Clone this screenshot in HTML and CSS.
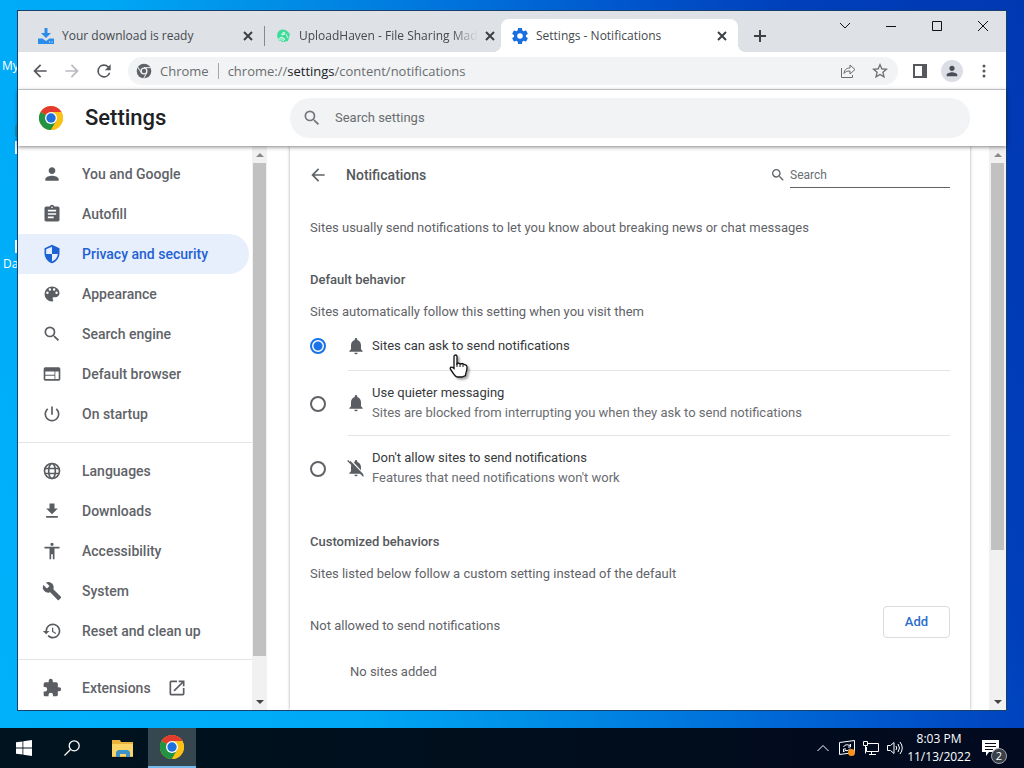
FILE: index.html
```html
<!DOCTYPE html>
<html lang="en">
<head>
<meta charset="utf-8">
<title>Settings - Notifications</title>
<link rel="stylesheet" href="styles.css">
</head>
<body>
<svg class="defs" aria-hidden="true">
  <symbol id="chrome" viewBox="0 0 24 24">
    <circle cx="12" cy="12" r="12" fill="#fbc116"/>
    <path d="M12 12 1.6 6A12 12 0 0 1 22.4 6z" fill="#e33b2e"/>
    <path d="M12 12 1.6 6A12 12 0 0 0 12 24l5.2-9z" fill="#229342"/>
    <path d="M12 6h10.4A12 12 0 0 1 12 24l5.2-9z" fill="#fbc116"/>
    <circle cx="12" cy="12" r="6" fill="#fff"/>
    <circle cx="12" cy="12" r="4.7" fill="#1f6fdc"/>
  </symbol>
  <symbol id="search" viewBox="0 0 24 24"><path d="M15.5 14h-.79l-.28-.27A6.47 6.47 0 0 0 16 9.5 6.5 6.5 0 1 0 9.5 16c1.61 0 3.09-.59 4.23-1.57l.27.28v.79l5 4.99L20.49 19l-4.99-5zm-6 0C7.01 14 5 11.99 5 9.5S7.01 5 9.5 5 14 7.01 14 9.5 11.99 14 9.5 14z"/></symbol>
  <symbol id="back" viewBox="0 0 24 24"><path d="M20 11H7.83l5.59-5.59L12 4l-8 8 8 8 1.41-1.41L7.83 13H20v-2z"/></symbol>
  <symbol id="person" viewBox="0 0 24 24"><path d="M12 12c2.21 0 4-1.79 4-4s-1.79-4-4-4-4 1.79-4 4 1.79 4 4 4zm0 2c-2.67 0-8 1.34-8 4v2h16v-2c0-2.66-5.33-4-8-4z"/></symbol>
  <symbol id="bell" viewBox="0 0 24 24"><path d="M12 22c1.1 0 2-.9 2-2h-4a2 2 0 0 0 2 2zm6-6v-5c0-3.07-1.64-5.64-4.500-6.320V4a1.500 1.500 0 0 0-3 0v.68C7.630 5.360 6 7.920 6 11v5l-2 2v1h16v-1l-2-2z"/></symbol>
  <symbol id="close" viewBox="0 0 16 16"><path d="m4 4 8 8m0-8-8 8" stroke="currentColor" stroke-width="2" fill="none"/></symbol>
</svg>

<main class="desktop">
  <span class="shortcut shortcut-green"></span>
  <span class="shortcut shortcut-label-a">My</span>
  <span class="shortcut shortcut-page-a"></span>
  <span class="shortcut shortcut-page-b"></span>
  <span class="shortcut shortcut-label-b">Da</span>

  <section class="window">
    <div class="tabstrip">
      <div class="tab">
        <svg class="i16" viewBox="0 0 16 16" fill="#2b8ceb"><path d="M6.500 0h3v5h3.500L8 10 3 5h3.500zM0 10.500h4.500L8 13l3.500-2.500H16V16H0z"/><path d="M11 14h1M13.500 14h1" stroke="#fff"/></svg>
        <span class="tab-title">Your download is ready</span>
        <button class="tab-close" aria-label="Close tab"><svg class="i16"><use href="#close"/></svg></button>
      </div>
      <div class="tab tab-divided">
        <svg class="i16" viewBox="0 0 16 16"><path d="M3 4a6 6 0 0 1 9-1l3 3-2 7-5 1-5-2-1-5z" fill="#3ddc97"/><path d="M7 5.500 9 4l1 2-3 1zM2.500 12 6 9l4 2-2 2M11 6l2 4" stroke="#d9f7ea" fill="#8cecc4"/></svg>
        <span class="tab-title tab-fade">UploadHaven - File Sharing Mad</span>
        <button class="tab-close" aria-label="Close tab"><svg class="i16"><use href="#close"/></svg></button>
      </div>
      <div class="tab tab-active">
        <svg class="i16" viewBox="2 2 20 20" fill="#1a6fe0"><path d="M19.430 12.980c.04-.32.07-.64.07-.98s-.03-.66-.07-.98l2.110-1.650a.5.5 0 0 0 .12-.64l-2-3.460a.5.5 0 0 0-.61-.22l-2.490 1a7.300 7.300 0 0 0-1.690-.98l-.38-2.650A.49.49 0 0 0 14 2h-4a.49.49 0 0 0-.49.42l-.38 2.650c-.61.25-1.170.59-1.690.98l-2.490-1a.5.5 0 0 0-.61.22l-2 3.460a.5.5 0 0 0 .12.64l2.110 1.650c-.04.32-.07.65-.07.98s.03.66.07.98l-2.110 1.650a.5.5 0 0 0-.12.64l2 3.460c.12.22.39.3.61.22l2.490-1c.52.4 1.080.73 1.690.98l.38 2.650c.03.24.24.42.49.42h4c.25 0 .46-.18.49-.42l.38-2.650c.61-.25 1.170-.59 1.690-.98l2.490 1c.23.09.49 0 .61-.22l2-3.460a.5.5 0 0 0-.12-.64l-2.110-1.650zM12 15.500a3.500 3.500 0 1 1 0-7 3.500 3.500 0 0 1 0 7z"/></svg>
        <span class="tab-title">Settings - Notifications</span>
        <button class="tab-close" aria-label="Close tab"><svg class="i16"><use href="#close"/></svg></button>
      </div>
      <button class="new-tab" aria-label="New tab"><svg class="i16" viewBox="0 0 16 16"><path d="M8 2v12M2 8h12" stroke="currentColor" stroke-width="2"/></svg></button>
      <div class="caption">
        <button aria-label="Search tabs"><svg class="i16" viewBox="0 0 16 16"><path d="m3 5 5 5 5-5"/></svg></button>
        <button aria-label="Minimize"><svg class="i16" viewBox="0 0 16 16"><path d="M3 8.500h10"/></svg></button>
        <button aria-label="Maximize"><svg class="i16" viewBox="0 0 16 16"><path d="M3.500 3.500h9v9h-9z"/></svg></button>
        <button aria-label="Close"><svg class="i16" viewBox="0 0 16 16"><path d="m3 3 10 10m0-10L3 13"/></svg></button>
      </div>
    </div>

    <div class="toolbar">
      <button aria-label="Back"><svg class="i20"><use href="#back"/></svg></button>
      <button class="disabled" aria-label="Forward"><svg class="i20 flip"><use href="#back"/></svg></button>
      <button aria-label="Reload"><svg class="i20" viewBox="0 0 24 24"><path d="M17.650 6.350A8 8 0 1 0 19.730 14h-2.080A6 6 0 1 1 12 6c1.660 0 3.140.69 4.220 1.780L13 11h7V4l-2.350 2.350z"/></svg></button>
      <div class="omnibox">
        <svg class="i16" viewBox="0 0 24 24"><circle cx="12" cy="12" r="11" fill="#5f6368"/><path d="M12 7h10M7.700 14.500 2.700 6M16.300 14.500 11.500 23" stroke="#f1f3f4" stroke-width="1.500"/><circle cx="12" cy="12" r="4.300" fill="#5f6368" stroke="#f1f3f4" stroke-width="2"/></svg>
        <span>Chrome</span><span class="omni-sep"></span>
        <span class="url">chrome://<b>settings</b>/content/notifications</span>
        <button aria-label="Share"><svg class="i16" viewBox="0 0 16 16" fill="none" stroke="currentColor"><path d="M1.500 5v9.500h11V12M4 10.500c.5-4 2.500-5.500 6-5.500V2l5 4.500-5 4.500V8c-3 0-4.500.5-6 2.500z"/></svg></button>
        <button aria-label="Bookmark"><svg class="i16" viewBox="2 2 20 20"><path d="m22 9.240-7.190-.62L12 2 9.190 8.630 2 9.240l5.460 4.730L5.820 21 12 17.270 18.180 21l-1.630-7.030L22 9.240zM12 15.400l-3.760 2.270 1-4.280-3.320-2.880 4.380-.38L12 6.100l1.710 4.040 4.380.38-3.320 2.880 1 4.280L12 15.400z"/></svg></button>
      </div>
      <button aria-label="Side panel"><svg class="i16" viewBox="0 0 16 16"><path fill-rule="evenodd" d="M1 1h14v14H1zM3 3v10h7V3z"/></svg></button>
      <button aria-label="Profile"><span class="avatar"><svg class="i16"><use href="#person"/></svg></span></button>
      <button aria-label="Menu"><svg class="i16" viewBox="0 0 16 16"><circle cx="8" cy="3" r="1.500"/><circle cx="8" cy="8" r="1.500"/><circle cx="8" cy="13" r="1.500"/></svg></button>
    </div>

    <header class="header">
      <svg class="logo"><use href="#chrome"/></svg>
      <h1>Settings</h1>
      <label class="big-search"><svg class="i20"><use href="#search"/></svg><input type="text" placeholder="Search settings" aria-label="Search settings"></label>
    </header>

    <div class="content">
      <nav class="sidebar">
        <a href="#"><svg class="i20"><use href="#person"/></svg>You and Google</a>
        <a href="#"><svg class="i20" viewBox="0 0 24 24"><path d="M19 3h-4.180a3 3 0 0 0-5.640 0H5a2 2 0 0 0-2 2v14c0 1.100.9 2 2 2h14a2 2 0 0 0 2-2V5a2 2 0 0 0-2-2zm-7 0a1 1 0 1 1 0 2 1 1 0 0 1 0-2zm2 14H7v-2h7v2zm3-4H7v-2h10v2zm0-4H7V7h10v2z"/></svg>Autofill</a>
        <a href="#" class="selected"><svg class="i20" viewBox="0 0 24 24"><path d="M12 1 3 5v6c0 5.550 3.840 10.740 9 12 5.160-1.260 9-6.450 9-12V5l-9-4zm0 10.990h7c-.53 4.120-3.280 7.790-7 8.940V12H5V6.300l7-3.110v8.800z"/></svg>Privacy and security</a>
        <a href="#"><svg class="i20" viewBox="0 0 24 24"><path d="M12 3a9 9 0 0 0 0 18c.83 0 1.500-.67 1.500-1.500 0-.39-.15-.74-.39-1.010-.23-.26-.38-.61-.38-.99 0-.83.67-1.500 1.500-1.500H16a5 5 0 0 0 5-5c0-4.420-4.030-8-9-8zm-5.500 9a1.500 1.500 0 1 1 0-3 1.500 1.500 0 0 1 0 3zm3-4a1.500 1.500 0 1 1 0-3 1.500 1.500 0 0 1 0 3zm5 0a1.500 1.500 0 1 1 0-3 1.500 1.500 0 0 1 0 3zm3 4a1.500 1.500 0 1 1 0-3 1.500 1.500 0 0 1 0 3z"/></svg>Appearance</a>
        <a href="#"><svg class="i20"><use href="#search"/></svg>Search engine</a>
        <a href="#"><svg class="i20" viewBox="0 0 24 24"><path d="M20 4H4a2 2 0 0 0-2 2v12c0 1.100.9 2 2 2h16a2 2 0 0 0 2-2V6a2 2 0 0 0-2-2zm-5 14H4v-4h11v4zm0-5H4V9h11v4zm5 5h-4V9h4v9z"/></svg>Default browser</a>
        <a href="#"><svg class="i20" viewBox="0 0 24 24"><path d="M13 3h-2v10h2V3zm4.830 2.170-1.420 1.420A6.920 6.920 0 0 1 19 12a7 7 0 1 1-11.420-5.420L6.170 5.170A9 9 0 1 0 21 12a8.940 8.940 0 0 0-3.170-6.830z"/></svg>On startup</a>
        <hr>
        <a href="#"><svg class="i20" viewBox="0 0 24 24" fill="none" stroke="currentColor" stroke-width="2"><circle cx="12" cy="12" r="9"/><ellipse cx="12" cy="12" rx="4" ry="9"/><path d="M3.500 9h17M3.500 15h17"/></svg>Languages</a>
        <a href="#"><svg class="i20" viewBox="0 0 24 24"><path d="M19 9h-4V3H9v6H5l7 7 7-7zM5 18v2h14v-2H5z"/></svg>Downloads</a>
        <a href="#"><svg class="i20" viewBox="0 0 24 24"><path d="M12 2a2 2 0 1 1 0 4 2 2 0 0 1 0-4zm9 7h-6v13h-2v-6h-2v6H9V9H3V7h18v2z"/></svg>Accessibility</a>
        <a href="#"><svg class="i20" viewBox="0 0 24 24"><path d="m22.700 19-9.100-9.100c.9-2.300.4-5-1.500-6.900-2-2-5-2.400-7.400-1.300L9 6 6 9 1.600 4.700C.4 7.100.9 10.100 2.900 12.100c1.900 1.900 4.600 2.400 6.900 1.500l9.100 9.100c.4.4 1 .4 1.400 0l2.300-2.300c.5-.4.5-1.100.1-1.400z"/></svg>System</a>
        <a href="#"><svg class="i20" viewBox="0 0 24 24"><path d="M13 3a9 9 0 0 0-9 9H1l3.890 3.890.07.14L9 12H6a7 7 0 1 1 2.060 4.940l-1.420 1.420A9 9 0 1 0 13 3zm-1 5v5l4.280 2.540.72-1.210-3.500-2.080V8H12z"/></svg>Reset and clean up</a>
        <hr>
        <a href="#"><svg class="i20" viewBox="0 0 24 24"><path d="M20.500 11H19V7a2 2 0 0 0-2-2h-4V3.500a2.500 2.500 0 0 0-5 0V5H4a2 2 0 0 0-2 2v3.800h1.500a2.700 2.700 0 0 1 0 5.400H2V20c0 1.100.9 2 2 2h3.800v-1.500a2.700 2.700 0 0 1 5.400 0V22H17a2 2 0 0 0 2-2v-4h1.500a2.500 2.500 0 0 0 0-5z"/></svg>Extensions<svg class="i20 external" viewBox="0 0 24 24"><path d="M19 19H5V5h7V3H5a2 2 0 0 0-2 2v14c0 1.100.9 2 2 2h14a2 2 0 0 0 2-2v-7h-2v7zM14 3v2h3.590l-9.830 9.830 1.410 1.410L19 6.410V10h2V3h-7z"/></svg></a>
      </nav>
      <div class="scroll scroll-side"><i class="arrow up"></i><div class="track"><div class="thumb"></div></div><i class="arrow down"></i></div>

      <div class="pane">
        <article class="card">
          <div class="card-head">
            <button aria-label="Back"><svg class="i20"><use href="#back"/></svg></button>
            <h2>Notifications</h2>
            <label class="small-search"><svg class="i16"><use href="#search"/></svg><input type="text" placeholder="Search" aria-label="Search"></label>
          </div>
          <p class="intro">Sites usually send notifications to let you know about breaking news or chat messages</p>
          <h3>Default behavior</h3>
          <p>Sites automatically follow this setting when you visit them</p>
          <div class="options">
            <label class="option option-short"><input type="radio" name="mode" checked><span class="option-body"><svg class="i20"><use href="#bell"/></svg><span>Sites can ask to send notifications</span></span></label>
            <label class="option"><input type="radio" name="mode"><span class="option-body"><svg class="i20"><use href="#bell"/></svg><span>Use quieter messaging<small>Sites are blocked from interrupting you when they ask to send notifications</small></span></span></label>
            <label class="option"><input type="radio" name="mode"><span class="option-body"><svg class="i20" viewBox="0 0 24 24"><path d="M20 18.690 7.840 6.140 5.270 3.490 4 4.760l2.800 2.800v.01C6.280 8.560 6 9.730 6 11v5l-2 2v1h13.730l2 2L21 19.720 20 18.690zM12 22a2 2 0 0 0 2-2h-4a2 2 0 0 0 2 2zm6-7.320V11c0-3.080-1.640-5.640-4.500-6.320V4a1.500 1.500 0 0 0-3 0v.68c-.51.12-.99.32-1.450.56L18 14.680z"/><path d="m2 3 19 19" stroke="currentColor" stroke-width="1.500"/></svg><span>Don't allow sites to send notifications<small>Features that need notifications won't work</small></span></span></label>
          </div>
          <h3>Customized behaviors</h3>
          <p>Sites listed below follow a custom setting instead of the default</p>
          <div class="list-head"><span>Not allowed to send notifications</span><button class="add">Add</button></div>
          <p class="empty">No sites added</p>
        </article>
      </div>
      <div class="scroll scroll-main"><i class="arrow up"></i><div class="track"><div class="thumb"></div></div><i class="arrow down"></i></div>
    </div>
  </section>

  <svg class="cursor" viewBox="0 0 20 26"><path d="M5 2.500c0-2 3-2 3 0V10l1.500-1 2 1 2-.5 1.500 1 2 .5c1 .5 1 1 1 2.500 0 4-1.500 5-1.500 8L13 23H9c-3 0-4-3-7-7-2-2.500 0-4 3-1.500z" fill="#fff" stroke="#111" stroke-width="1.300"/><path d="M8 9v4M11 10v3M14 10.500V13" stroke="#111"/></svg>
</main>

<footer class="taskbar">
  <button class="task" aria-label="Start"><svg class="i16" viewBox="0 0 16 16" fill="#fff"><path d="M0 2.300 6.500 1.400v6.200H0zM7.300 1.300 16 0v7.600H7.300zM0 8.400h6.500v6.200L0 13.700zM7.300 8.400H16V16l-8.700-1.300z"/></svg></button>
  <button class="task" aria-label="Search"><svg class="i16" viewBox="0 0 16 16" fill="none" stroke="#fff" stroke-width="1.300"><circle cx="10.200" cy="5.800" r="5"/><path d="M6.500 9.500.5 15.500"/></svg></button>
  <div class="apps">
    <button class="task" aria-label="File Explorer"><svg class="folder" viewBox="0 0 22 18"><path d="M0 1h8l1 2h12v15H0z" fill="#e9b43d"/><path d="M0 5h21v12H0z" fill="#fbd567"/><path d="M4 18v-5l2-2h10l2 2v5h-4v-3H8v3z" fill="#3f92c9"/></svg></button>
    <button class="task task-open" aria-label="Google Chrome"><svg class="logo"><use href="#chrome"/></svg></button>
  </div>
  <div class="tray">
    <button aria-label="Show hidden icons"><svg class="i16" viewBox="0 0 16 16"><path d="m2.500 11 5.500-5.500 5.500 5.500"/></svg></button>
    <button aria-label="Update"><svg class="i16" viewBox="0 0 16 16"><path d="M.5 2.500 15.500.5v12l-15 2zM4.500 7a4 4 0 0 1 6-1.500l1-1.500v3H9M11 8.500a4 4 0 0 1-5 2L4.500 12V9H7"/><circle cx="12.500" cy="12.500" r="3.500" fill="#f7931e" stroke="none"/></svg></button>
    <button aria-label="Network"><svg class="i16" viewBox="0 0 16 16"><path d="M5 3.500h10.500v8H3.500V7M8.500 11.500v3M6 14.500h7M.5 1.500h4v4h-4zM2.500 5.500v8"/></svg></button>
    <button aria-label="Volume"><svg class="i16" viewBox="0 0 16 16"><path d="M.5 5.500h3l3.500-3v11l-3.500-3h-3zM9 6q1.500 2 0 4M11 4q3 4 0 8M13 2q4.500 6 0 12"/></svg></button>
    <div class="clock"><span>8:03 PM</span><span>11/13/2022</span></div>
    <button class="notices" aria-label="2 notifications"><svg class="i20" viewBox="0 0 20 20"><path d="M1 2h17v12H8l-3 4v-4H1z" fill="#fff" stroke="none"/><path d="M4 5.500h11M4 8.500h11M4 11.500h8" stroke="#020d1c"/></svg><span class="badge">2</span></button>
  </div>
</footer>
</body>
</html>
```

FILE: styles.css
```css
* { box-sizing: border-box; }
body {
  margin: 0;
  height: 100vh;
  display: flex;
  flex-direction: column;
  overflow: hidden;
  font: 13px/20px Roboto, sans-serif;
  color: #5f6368;
}
button { border: 0; padding: 0; background: none; color: inherit; font: inherit; display: flex; align-items: center; justify-content: center; }
input { font: inherit; color: inherit; border: 0; padding: 0; background: none; outline: 0; min-width: 0; }
input::placeholder { color: #6a6d71; opacity: 1; }
h1, h2, h3, p { margin: 0; }
svg { flex: none; display: block; }
svg:not([fill]) { fill: currentColor; }
.defs { position: absolute; width: 0; height: 0; }
.i16 { width: 16px; height: 16px; }
.i20 { width: 20px; height: 20px; }
.flip { transform: scaleX(-1); }
.logo { width: 24px; height: 24px; }

.desktop {
  position: relative;
  flex: 1;
  min-height: 0;
  display: flex;
  padding: 11px 18px 18px;
  background: linear-gradient(70deg, #00b2fa 0%, #00a8f6 28%, #008ce6 43%, #0074dc 55%, #0054cb 70%, #003fba 82%, #0038b2 100%);
}
.shortcut { position: absolute; color: #fff; font: 12px/16px "Open Sans", sans-serif; }
.shortcut-label-a { left: 2px; top: 58px; }
.shortcut-label-b { left: 3px; top: 256px; }
.shortcut-green { left: 15px; top: 124px; width: 8px; height: 14px; background: #1690b4; border-radius: 8px; }
.shortcut-page-a, .shortcut-page-b { left: 15px; width: 8px; height: 13px; background: #e8f4fb; }
.shortcut-page-a { top: 141px; }
.shortcut-page-b { top: 240px; }

.window {
  position: relative;
  flex: 1;
  min-width: 0;
  display: flex;
  flex-direction: column;
  background: #fff;
  box-shadow: 0 0 0 1px #17406a;
}

.tabstrip { display: flex; height: 41px; padding-left: 9px; background: #dee1e6; font: 12px/16px "Open Sans", sans-serif; color: #45494d; }
.tab { position: relative; display: flex; align-items: center; gap: 8px; flex: 0 1 237px; min-width: 0; margin-top: 8px; padding: 0 8px 0 11px; }
.tab-title { flex: 1; min-width: 0; white-space: nowrap; }
.tab-fade { mask-image: linear-gradient(90deg, #000 85%, transparent); }
.tab-divided { gap: 6px; padding-right: 8px; }
.tab-divided .tab-title { flex: 1 0 auto; padding-left: 2px; }
.tab-divided .tab-close { width: 12px; padding-right: 0; }
.tab-divided::before { content: ""; position: absolute; left: 0; top: 7px; height: 20px; width: 1px; background: #85898e; }
.tab-active { background: #fff; border-radius: 8px 8px 0 0; }
.tab-active::before, .tab-active::after { content: ""; position: absolute; bottom: 0; width: 8px; height: 8px; }
.tab-active::before { right: 100%; background: radial-gradient(circle at 0 0, transparent 8px, #fff 8px); }
.tab-active::after { left: 100%; background: radial-gradient(circle at 100% 0, transparent 8px, #fff 8px); }
.tab-close { color: #3c4043; }
.new-tab { width: 28px; margin: 8px 0 0 8px; color: #3c4043; }
.caption { display: flex; margin-left: auto; height: 29px; color: #111; }
.caption button { width: 46px; }
.caption svg { fill: none; stroke: currentColor; }

.toolbar { display: flex; align-items: center; height: 38px; padding: 0 6px; border-bottom: 1px solid #d5d7da; color: #55585c; }
.toolbar > button { width: 32px; height: 32px; }
.toolbar .disabled { color: #b9bbbe; }
.omnibox { flex: 1; min-width: 0; display: flex; align-items: center; height: 28px; margin: 0 6px 0 8px; padding: 0 6px 0 8px; gap: 8px; border-radius: 14px; background: #f1f3f4; font: 13px/20px "Open Sans", sans-serif; color: #6a6d71; }
.omnibox button { width: 24px; }
.omni-sep { width: 1px; height: 16px; margin: 0 1px; background: #a5a8ab; }
.url { flex: 1; min-width: 0; overflow: hidden; white-space: nowrap; }
.url b { font-weight: 400; color: #202124; }
.avatar { display: flex; align-items: center; justify-content: center; width: 22px; height: 22px; border-radius: 50%; background: #dcdee6; color: #4a4d57; }

.header { position: relative; z-index: 1; display: flex; align-items: center; height: 56px; padding: 0 36px 0 21px; box-shadow: 0 1px 4px rgba(0, 0, 0, .5); background: #fff; }
.header h1 { width: 205px; margin-left: 22px; font: 500 22px/32px Roboto, sans-serif; color: #202124; }
.big-search { flex: 1; display: flex; align-items: center; gap: 13px; height: 40px; padding: 0 12px; border-radius: 20px; background: #f1f3f4; color: #74777b; }
.big-search input { flex: 1; }

.content { flex: 1; min-height: 0; display: flex; }
.sidebar { flex: 0 0 234px; overflow: hidden; padding-top: 8px; font-weight: 500; font-size: 14px; }
.sidebar a { display: flex; align-items: center; height: 40px; padding-left: 24px; color: #5f6368; text-decoration: none; white-space: nowrap; }
.sidebar svg { margin-right: 20px; color: #5a5d61; }
.sidebar .external { margin: 0 0 0 16px; }
.sidebar .selected, .sidebar .selected svg { color: #1f62d3; }
.sidebar .selected { margin-right: 3px; border-radius: 0 20px 20px 0; background: #e8effc; }
.sidebar hr { margin: 8px 0; border: 0; border-top: 1px solid #e3e4e6; }
.scroll { flex: none; display: flex; flex-direction: column; background: #f1f1f1; }
.scroll-side { width: 15px; padding: 0 1px; }
.scroll-main { width: 17px; padding: 0 2px; }
.arrow { height: 17px; display: flex; align-items: center; justify-content: center; }
.arrow::before { content: ""; border: 4px solid transparent; }
.up::before { border-bottom-color: #8a8a8a; border-top: 0; }
.down::before { border-top-color: #444; border-bottom: 0; }
.track { flex: 1; min-height: 0; }
.thumb { background: #c1c1c1; }
.scroll-side .thumb { height: 93%; }
.scroll-main .thumb { height: 73%; }

.pane { flex: 1; min-width: 0; overflow: hidden; padding: 0 19px 0 23px; }
.card { min-height: 100%; padding: 8px 20px 0; box-shadow: 0 0 3px rgba(0, 0, 0, .35); }
.card-head { display: flex; align-items: center; height: 42px; margin-left: -2px; }
.card h2, .card h3 { font-weight: 500; font-size: 13px; line-height: 20px; color: #55585c; }
.card .card-head h2 { flex: 1; margin-left: 18px; font-size: 14px; }
.small-search { display: flex; align-items: center; gap: 4px; }
.small-search input { width: 160px; height: 26px; border-bottom: 1px solid #5f6368; font-size: 12px; }
.intro { margin: 22px 0 32px; }
.card h3 + p { margin-top: 12px; }
.options { margin: -1px 0 31px; }
.option { display: flex; align-items: center; height: 65px; }
.option-short { height: 50px; }
.option input { appearance: none; width: 16px; height: 16px; margin: 0 22px 0 0; border: 2px solid #5f6368; border-radius: 50%; }
.option input:checked { border-color: #1a73e8; background: radial-gradient(circle, #1a73e8 4px, transparent 5px); }
.option-body { flex: 1; height: 100%; display: flex; align-items: center; gap: 6px; border-bottom: 1px solid #e3e4e6; color: #37393c; }
.option:last-child .option-body { border-color: transparent; }
.option svg { margin-left: -2px; color: #5a5d61; }
.option small { display: block; font-size: 13px; color: #6a6d71; }
.list-head { display: flex; align-items: center; justify-content: space-between; height: 32px; margin-top: 22px; }
.list-head span { padding-top: 7px; }
.add { width: 67px; height: 32px; border: 1px solid #dadce0; border-radius: 4px; font-weight: 500; color: #2b6dc9; }
.empty { margin: 24px 0 0 40px; }

.cursor { position: absolute; left: 449px; top: 354px; width: 20px; height: 26px; filter: drop-shadow(2px 2px 1px rgba(0, 0, 0, .35)); }

.taskbar { display: flex; height: 40px; background: linear-gradient(90deg, #00141f, #010d1c 60%, #020a20); color: #fff; font: 12px/18px "Open Sans", sans-serif; }
.task { width: 48px; height: 40px; }
.apps { display: flex; gap: 1px; padding-left: 3px; }
.folder { width: 22px; height: 18px; }
.task-open { background: #36474f; border-bottom: 2px solid #76b9ed; }
.tray { display: flex; align-items: center; margin-left: auto; padding-right: 21px; }
.tray button { width: 24px; height: 40px; }
.tray svg { fill: none; stroke: #fff; }
.clock { display: flex; flex-direction: column; align-items: center; width: 64px; margin-right: 8px; }
.tray .notices { position: relative; }
.badge { position: absolute; right: -4px; bottom: 4px; width: 16px; height: 16px; border: 1px solid #9da3ab; border-radius: 50%; background: #3a4048; font-size: 11px; line-height: 14px; text-align: center; }
```
